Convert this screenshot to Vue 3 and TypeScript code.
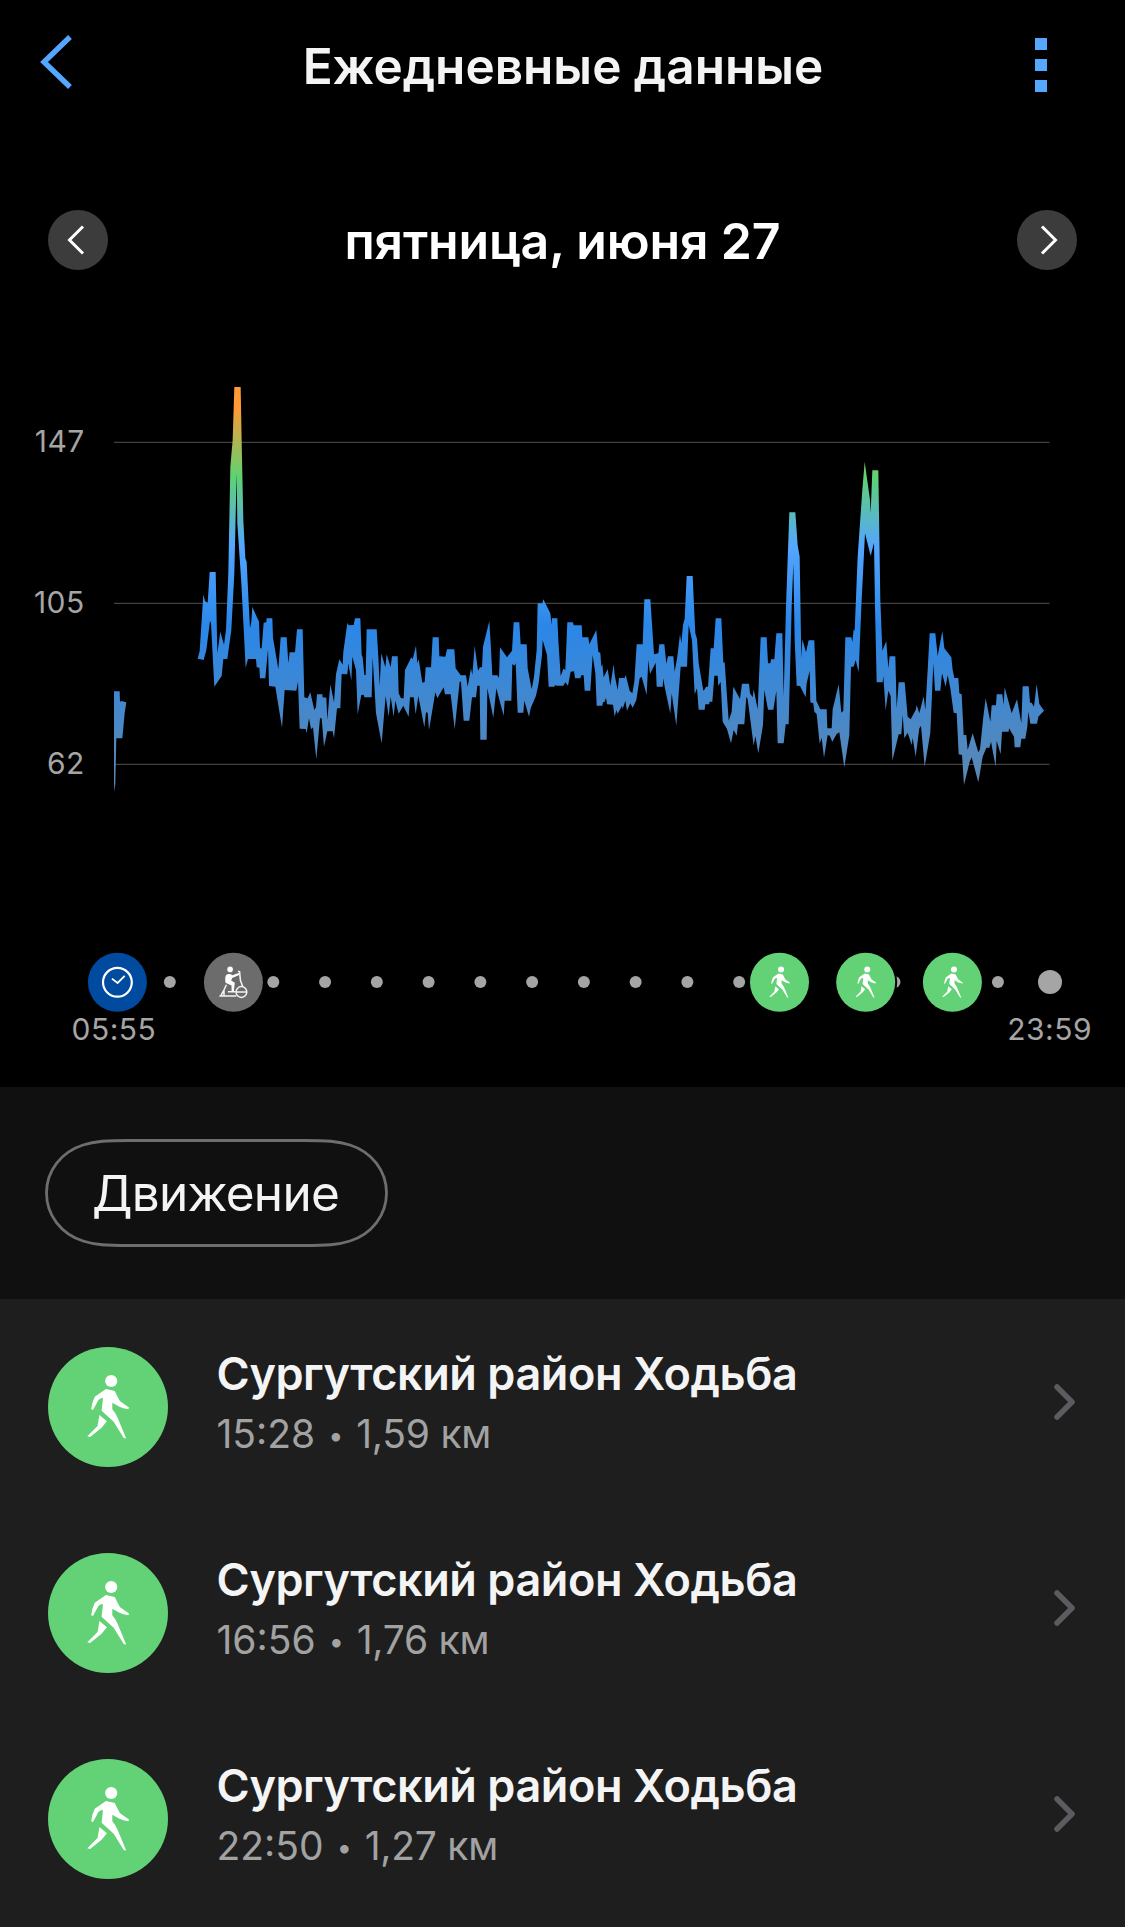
<script setup lang="ts">
interface Segment {
  origin: [number, number]
  upper: string
  lower: string
}

interface Activity {
  title: string
  time: string
  distance: string
}

// Heart-rate band: every segment lists its upper and lower edge relative to its origin,
// in thirds of a pixel.
const segments: Segment[] = [
  {
    origin: [60, 1110],
    upper:
      '533,866 539,843 550,674 555,693 563,698 569,606 587,606 592,850 601,785 612,824 618,780 625,610 631,290 638,210 643,51 662,51 665,215 670,450 676,565 680,575 686,700 690,775 694,755 697,711 717,755 720,835 725,835 731,758 739,757 740,745 757,745 759,803 775,898 782,802 800,802 805,880 809,847 825,847 831,778 848,778 853,982 863,985 871,967 883,1020 888,1012 891,973 907,973 908,982 919,983 922,1050 931,943 942,997 948,912 958,868 968,884 970,845 982,760',
    lower:
      '533,866 551,870 559,840 570,753 573,760 583,950 605,918 610,867 622,867 634,780 643,610 650,310 652,460 659,565 664,640 677,893 684,867 708,867 710,892 718,893 720,925 736,925 744,838 747,948 766,950 786,1073 794,960 829,962 834,935 839,1076 857,1077 860,1089 867,1045 873,1078 879,1072 889,1168 900,1045 905,1045 912,1130 922,1084 938,1084 942,1105 951,1015 961,1015 965,912',
  },
  {
    origin: [960, 1680],
    upper:
      '83,190 86,196 101,195 105,175 121,175 125,285 128,292 133,345 137,345 140,208 170,208 175,290 179,378 184,280 196,322 200,283 212,322 216,289 233,289 236,400 243,415 251,415 255,330 274,292 278,298 288,257 292,310 296,297 307,368 314,366 317,322 333,322 338,232 356,232 358,289 376,290 381,268 403,268 407,325 422,346 438,346 443,380 453,325 457,345 464,257 474,332 480,322 486,322 489,260 508,183 512,250 517,346 532,346 537,354 540,262 561,292 576,272 581,187 598,187 602,253 620,253 623,325 635,388 642,350 650,270 653,130 667,130 670,118 691,160 695,195 696,175 712,175',
    lower:
      '82,343 85,310 94,362 97,290 108,330 113,463 124,405 131,404 133,412 155,412 158,292 168,460 185,550 197,408 206,470 212,410 221,470 226,422 236,461 250,437 266,470 270,412 281,412 287,463 295,408 313,502 318,457 323,458 327,510 346,397 352,415 371,382 375,403 392,403 404,508 419,365 423,365 431,482 448,482 456,412 468,412 472,377 479,377 481,539 500,539 502,385 520,473 529,385 551,467 554,422 574,422 577,312 583,317 587,310 593,458 610,458 613,422 627,470 632,445 648,407 656,370 666,285 668,240 681,285',
  },
  {
    origin: [1620, 1680],
    upper:
      '55,240 62,348 70,326 76,330 82,187 99,187 101,196 125,196 127,232 145,232 148,253 169,210 175,276 181,278 184,320 187,312 191,352 203,327 211,377 221,313 224,345 233,390 237,354 254,354 257,344 269,392 277,400 283,365 290,253 308,253 313,118 331,118 342,283 355,280 358,253 373,253 379,311 384,289 400,289 404,335 412,290 420,222 424,250 429,195 434,176 440,48 458,48 463,160 466,220 471,237 476,310 490,392 494,388 498,380 504,380 512,265 521,265 527,175 544,175 550,308 554,307 566,482 575,455 580,380 600,417 606,371 627,371 630,400 638,412 641,388 653,448 662,232 680,232 684,310 691,310 693,298 703,298',
    lower:
      '26,380 43,380 45,375 50,377 70,377 76,367 84,377 92,335 102,334 105,355 121,355 124,346 131,346 134,392 151,392 158,285 166,340 170,437 187,437 189,427 194,425 198,413 201,433 219,434 224,470 229,450 233,461 246,437 248,447 256,422 261,452 271,430 278,443 289,420 299,355 305,350 320,405 325,300 330,342 347,308 350,380 368,380 370,355 374,380 391,461 395,400 409,497 422,320 441,320 446,195 456,240 464,403 471,385 476,449 494,449 496,433 507,433 509,425 517,425 523,347 533,347 535,378 542,365 548,485 561,507 573,550 581,510 590,527 594,493 613,493 619,410 623,418 641,557 646,528 655,580 669,495 673,390 684,449 700,449',
  },
  {
    origin: [2220, 1320],
    upper:
      '109,580 127,580 131,770 138,500 148,217 166,217 173,315 179,350 184,655 187,598 198,637 206,601 223,601 229,782 241,808 260,808 262,865 275,865 278,808 296,733 304,818 310,812 316,592 334,592 337,606 341,568 344,572 353,350 367,150 374,65 390,180 392,220 397,91 415,91 421,480 427,632 439,604 445,685 449,649 466,649 470,805 476,727 494,727 503,830 512,838 527,810 530,795 538,820 551,769 556,810 563,690',
    lower:
      '109,752 113,910 131,910 137,853 146,853 155,500 160,370 164,600 170,737 180,738 197,772 200,730 209,692 211,787 220,790 223,815 230,822 239,911 245,893 252,953 263,885 269,887 277,905 290,882 298,877 313,982 328,885 333,680 341,680 347,660 356,697 364,500 375,280 392,348 402,308 405,500 410,727 428,727 430,708 437,811 445,752 452,768 457,962 476,883 484,883 488,825 493,895 503,878 515,915 518,893 527,950 538,865 543,858 554,980',
  },
  {
    origin: [2700, 1680],
    upper:
      '89,220 106,220 113,288 127,213 133,265 154,292 158,330 163,354 175,354 178,400 185,403 191,525 199,525 203,570 218,520 235,577 240,568 250,470 257,415 271,485 275,436 288,436 290,403 307,403 311,435 314,382 335,460 351,418 364,490 368,379 386,379 390,428 395,428 402,440 410,372 418,432 432,452',
    lower:
      '91,518 100,310 105,392 121,392 126,340 137,380 143,345 151,385 161,458 170,460 176,583 186,585 192,675 209,605 215,592 235,667 248,590 259,563 268,563 273,545 287,620 290,542 302,583 306,515 326,515 327,505 342,530 344,562 361,562 364,536 376,536 382,500 385,455 391,491 411,491 415,470 432,452',
  },
]

const chartTop = 300

function place(points: string, [ox, oy]: [number, number]): string[] {
  return points.split(' ').map((pair) => {
    const [x, y] = pair.split(',').map(Number)
    return `${((x + ox) / 3).toFixed(2)},${((y + oy) / 3 - chartTop).toFixed(2)}`
  })
}

const upperEdge = segments.flatMap((s) => place(s.upper, s.origin))
const lowerEdge = segments.flatMap((s) => place(s.lower, s.origin))
const band = [...upperEdge, ...lowerEdge.reverse()].join(' ')
const morning = place(
  '282,964 299,964 300,995 304,993 319,997 314,1030 307,1105 289,1105 286,1240 284,1265 282,1240',
  [60, 1110],
).join(' ')

const gridLines = [
  { label: 147, y: 142.4 },
  { label: 105, y: 303.4 },
  { label: 62, y: 464.4 },
]

const hourDots = Array.from({ length: 17 }, (_, i) => 169.8 + i * 51.76)
const walks = [779.5, 865.7, 952.4]

const activities: Activity[] = [
  { title: 'Сургутский район Ходьба', time: '15:28', distance: '1,59 км' },
  { title: 'Сургутский район Ходьба', time: '16:56', distance: '1,76 км' },
  { title: 'Сургутский район Ходьба', time: '22:50', distance: '1,27 км' },
]
</script>

<template>
  <main class="screen">
    <svg class="defs" width="0" height="0" aria-hidden="true">
      <symbol id="walker" viewBox="0 0 120 120">
        <circle cx="63.2" cy="34" r="6.1" />
        <path d="M57.9 42 L66.8 44 Q69 49 72.1 54.3 L81 60.5 L80.4 62.3 Q75 61.6 71.4 59.7 L64.3 55.7 V62.3 Q67.6 66 69.6 70.7 L78.2 91.5 L75.7 91 L65.7 74.7 L53.6 63.7 L55 51 Q52 51 50.4 53 L45 63 L43.2 62.3 Q44 55 46.8 49.7 Z" />
        <path d="M51.4 68 L58.9 74.3 L53.6 80.7 L42.1 90 L39.3 89.3 L49.6 79 Z" />
      </symbol>
    </svg>

    <header class="topbar">
      <button class="back" aria-label="Назад">
        <svg width="34" height="56" viewBox="0 0 34 56"><path d="M30 3 L4 28 L30 53" fill="none" stroke="#54a6ff" stroke-width="5.4" /></svg>
      </button>
      <h1>Ежедневные данные</h1>
      <button class="more" aria-label="Меню"><i /><i /><i /></button>
    </header>

    <nav class="datebar">
      <button class="round" aria-label="Предыдущий день">
        <svg width="60" height="60" viewBox="0 0 60 60"><path d="M35 16.5 L21.5 30 L35 43.5" fill="none" stroke="#fff" stroke-width="3" /></svg>
      </button>
      <h2>пятница, июня 27</h2>
      <button class="round" aria-label="Следующий день">
        <svg width="60" height="60" viewBox="0 0 60 60"><path d="M25 16.5 L38.5 30 L25 43.5" fill="none" stroke="#fff" stroke-width="3" /></svg>
      </button>
    </nav>

    <svg class="chart" width="1125" height="600" viewBox="0 0 1125 600">
      <defs>
        <linearGradient id="zones" gradientUnits="userSpaceOnUse" x1="0" y1="100" x2="0" y2="490">
          <stop offset="0" stop-color="#ff9a35" />
          <stop offset="0.02" stop-color="#ff9a35" />
          <stop offset="0.195" stop-color="#5fd272" />
          <stop offset="0.376" stop-color="#54a6ff" />
          <stop offset="0.58" stop-color="#2a87e8" />
          <stop offset="1" stop-color="#5f88af" />
        </linearGradient>
      </defs>
      <g v-for="line in gridLines" :key="line.label">
        <line x1="114" x2="1049.5" :y1="line.y" :y2="line.y" stroke="#414141" stroke-width="1.3" />
        <text class="axis" x="84.8" :y="line.y + 9.8" text-anchor="end">{{ line.label }}</text>
      </g>
      <polygon :points="morning" fill="url(#zones)" />
      <polygon :points="band" fill="url(#zones)" />
    </svg>

    <section class="timeline">
      <svg width="1125" height="100" viewBox="0 932 1125 100">
        <circle v-for="x in hourDots" :key="x" :cx="x" cy="982" r="6" fill="#a5a5a5" />
        <circle cx="1050" cy="982" r="12" fill="#a5a5a5" />
        <g transform="translate(117.4 982.3)">
          <circle r="31.5" fill="#000" />
          <circle r="29.5" fill="#004b9f" />
          <circle r="14.4" fill="none" stroke="#fff" stroke-width="2.2" />
          <path d="M-5.5 -3.7 L0.2 0.7 L7.3 -6.5" fill="none" stroke="#fff" stroke-width="1.8" />
        </g>
        <g transform="translate(233.4 982.3)">
          <circle r="31.5" fill="#000" />
          <circle r="29.5" fill="#6c6c6c" />
          <circle cx="-3.3" cy="-12.9" r="2.8" fill="#fff" />
          <path d="M-8 -5.6 Q-7.6 -8.2 -5 -8.2 Q-2.6 -8.6 -1 -7 L5.4 -9.4 L5.8 -7.4 L-1.2 -4.4 L-2.2 -1.8 L1.4 0.4 L0.4 9 L-1.8 9 L-1.9 3.2 L-7.4 0.8 Q-8.6 0 -8 -5.6 Z" fill="#fff" />
          <g fill="none" stroke="#f4f4f4" stroke-width="1.5">
            <path d="M4.6 -11 L6.2 -10.4 L7 -2 L9.4 4.4 M-7 2.4 L-9.8 8.4 L-12.6 13.6 M-9.4 7.6 V13 M-14 13.8 H3 M-5.5 9.4 H2.2" />
            <circle cx="8" cy="9.7" r="5.4" />
            <path d="M2.6 9.7 H13.4" />
          </g>
        </g>
        <g v-for="x in walks" :key="x" :transform="`translate(${x} 982.3)`">
          <circle r="31.5" fill="#000" />
          <circle r="29.5" fill="#63d277" />
          <use href="#walker" x="-29.4" y="-29.4" width="58.8" height="58.8" fill="#fff" />
        </g>
      </svg>
      <div class="range"><span>05:55</span><span>23:59</span></div>
    </section>

    <section class="filters">
      <button class="chip">
        <svg width="343" height="108" viewBox="0 0 343 108">
          <path
            d="M84 1.5 H259 C281 1.5 293 2 305 6 C327 13 341.5 32 341.5 54 C341.5 76 327 95 305 102 C293 106 281 106.5 259 106.5 H84 C62 106.5 50 106 38 102 C16 95 1.5 76 1.5 54 C1.5 32 16 13 38 6 C50 2 62 1.5 84 1.5 Z"
            fill="none" stroke="#6e6e6e" stroke-width="2.8"
          />
        </svg>
        <span>Движение</span>
      </button>
    </section>

    <ul class="list">
      <li v-for="item in activities" :key="item.time">
        <svg class="badge" width="120" height="120" viewBox="0 0 120 120">
          <circle cx="60" cy="60" r="60" fill="#63d277" />
          <use href="#walker" width="120" height="120" fill="#fff" />
        </svg>
        <div class="info">
          <h3>{{ item.title }}</h3>
          <p><span class="time">{{ item.time }}</span><span class="bullet">•</span><span>{{ item.distance }}</span></p>
        </div>
        <svg class="chevron" width="24" height="38" viewBox="0 0 24 38"><path d="M4 4 L19 19 L4 34" fill="none" stroke="#5b5b60" stroke-width="5.5" stroke-linecap="round" stroke-linejoin="round" /></svg>
      </li>
    </ul>
  </main>
</template>

<style>
body {
  margin: 0;
  background: #000;
}
</style>

<style scoped>
.screen {
  width: 1125px;
  height: 1927px;
  overflow: hidden;
  background: #000;
  color: #f4f4f4;
  font-family: Inter, "Liberation Sans", sans-serif;
  display: flex;
  flex-direction: column;
}
.defs {
  position: absolute;
}
svg {
  display: block;
  flex: none;
}
h1, h2, h3, p, ul {
  margin: 0;
  padding: 0;
}
button {
  border: 0;
  padding: 0;
  background: none;
  color: inherit;
  font: inherit;
}
.topbar,
.datebar,
.timeline {
  flex: none;
  box-sizing: border-box;
}
.topbar {
  height: 132px;
  padding: 0 40px;
  display: grid;
  grid-template-columns: 50px 1fr 50px;
  align-items: center;
}
.back {
  margin-top: -8px;
  justify-self: start;
}
.topbar h1 {
  padding-left: 1px;
  font-size: 49.5px;
  line-height: 60px;
  font-weight: 600;
  text-align: center;
  white-space: nowrap;
}
.more {
  display: flex;
  flex-direction: column;
  gap: 9px;
  margin-top: -2px;
}
.more i {
  width: 12px;
  height: 12px;
  background: #54a6ff;
}
.datebar {
  height: 168px;
  padding: 78px 48px 30px;
  display: flex;
  align-items: center;
  justify-content: space-between;
}
.datebar h2 {
  padding-top: 2px;
  color: #fff;
  font-size: 50px;
  line-height: 60px;
  font-weight: 600;
  letter-spacing: -0.15px;
  white-space: nowrap;
}
.round {
  flex: none;
  width: 60px;
  height: 60px;
  border-radius: 50%;
  background: #3c3c3c;
}
.axis {
  font-size: 30px;
  letter-spacing: 0.5px;
  fill: #a5a5a5;
}
.timeline {
  height: 187px;
  padding-top: 32px;
}
.range {
  position: relative;
  display: flex;
  justify-content: space-between;
  padding: 0 33px 0 71.5px;
  margin-top: -21px;
  font-size: 30px;
  line-height: 36px;
  letter-spacing: 0.5px;
  color: #a5a5a5;
}
.filters {
  height: 212px;
  flex: none;
  background: #101010;
  display: flex;
  align-items: center;
  padding-left: 45px;
}
.chip {
  display: grid;
  place-items: center;
  width: 343px;
  height: 108px;
}
.chip > * {
  grid-area: 1 / 1;
}
.chip span {
  padding-right: 2px;
  font-size: 49.5px;
  line-height: 60px;
  letter-spacing: -0.75px;
}
.list {
  flex: 1;
  background: #1e1e1e;
  list-style: none;
  padding-top: 48px;
}
.list li {
  height: 120px;
  margin-bottom: 86px;
  padding: 0 48px;
  display: flex;
}
.info {
  flex: 1;
  padding-left: 48.5px;
}
.info h3 {
  font-size: 45px;
  line-height: 54px;
  font-weight: 600;
  letter-spacing: -0.43px;
  white-space: nowrap;
}
.info p {
  margin-top: 9px;
  display: flex;
  font-size: 39px;
  line-height: 48px;
  letter-spacing: -0.25px;
  color: #a2a2a2;
  white-space: nowrap;
}
.info .time {
  letter-spacing: 0;
}
.bullet {
  width: 41px;
  text-align: center;
  font-size: 27px;
  line-height: 52px;
  height: 48px;
}
.chevron {
  margin-top: 36px;
}
</style>
